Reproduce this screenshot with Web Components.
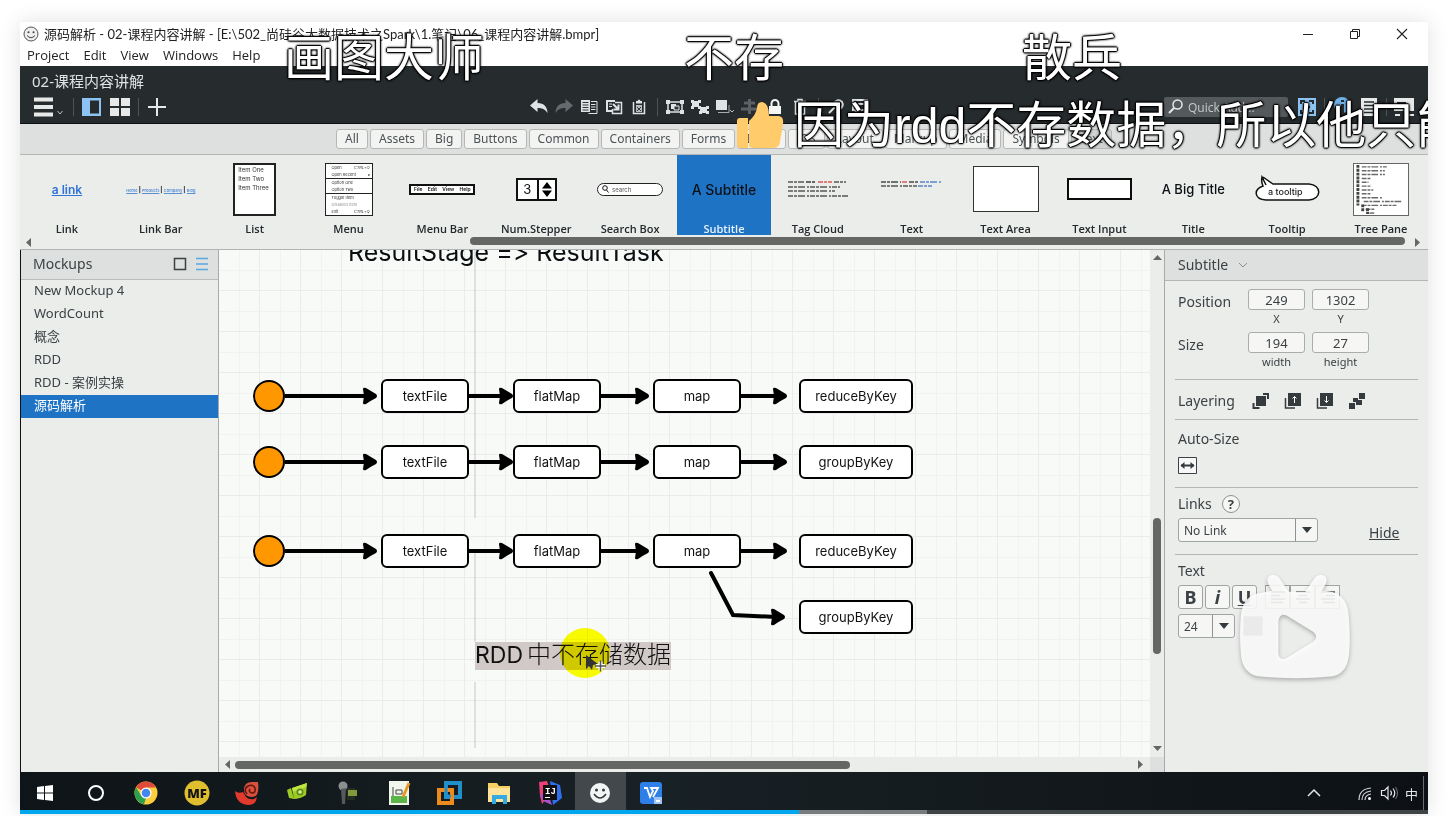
<!DOCTYPE html>
<html lang="zh-CN">
<head>
<meta charset="utf-8">
<title>源码解析 - 02-课程内容讲解</title>
<style>
  html, body { height: 100%; margin: 0; background: #fff; }
  body { font-family: "Open Sans", "Noto Sans CJK SC", sans-serif; font-size: 12px; color: #3b4145; }
</style>
</head>
<body>
<video-stage></video-stage>

<script>
const define = (name, css, html, setup) => {
  const template = document.createElement('template');
  template.innerHTML = `<style>:host,*{box-sizing:border-box}button,input,select{font:inherit;color:inherit;margin:0}button{border:0;background:none;padding:0}svg{display:block}${css}</style>${html}`;
  customElements.define(name, class extends HTMLElement {
    constructor() {
      super();
      this.attachShadow({ mode: 'open' }).append(template.content.cloneNode(true));
    }
    connectedCallback() { if (setup) setup(this, this.shadowRoot); }
  });
};

/* ---------- icons ---------- */
const ICONS = {
  smile: [16, 16, '<circle cx="8" cy="8" r="7" fill="#eee" stroke="#555"/><circle cx="5.5" cy="6.3" r="1" fill="#444"/><circle cx="10.5" cy="6.3" r="1" fill="#444"/><path d="M4 9.5q4 4.5 8 0" fill="none" stroke="#444"/>'],
  min: [12, 12, '<path d="M1 6.5h10" stroke="#222"/>'],
  restore: [12, 12, '<path d="M1.500 3.500h7v7h-7zM3.500 3.500v-2h7v7h-2" fill="none" stroke="#222"/>'],
  close: [12, 12, '<path d="M1 1l10 10M11 1L1 11" stroke="#222" stroke-width="1.100"/>'],
  menu: [20, 20, '<path d="M0 2.500h19M0 10h19M0 17.500h19" stroke="#e6e9e8" stroke-width="4"/>'],
  chev: [6, 20, '<path d="M.500 14l2.500 3 2.500-3" fill="none" stroke="#b9bfc0"/>'],
  side: [20, 20, '<path d="M0 1h19v18H0z" fill="#8cc3f2"/><path d="M8 3.500h9v13H8z" fill="#262b2e"/>'],
  grid: [20, 20, '<path d="M0 1h9v8H0zM11 1h9v8h-9zM0 11h9v8H0zM11 11h9v8h-9z" fill="#e6e9e8"/>'],
  plus: [20, 20, '<path d="M10 1v18M1 10h18" stroke="#e6e9e8" stroke-width="2"/>'],
  undo: [20, 18, '<path d="M1 7.500L8.500 1v4C15 5 18.500 9 18.500 15 16 11 13 10 8.500 10v4z" fill="#dfe3e3"/>'],
  redo: [20, 18, '<path d="M19 7.500L11.500 1v4C5 5 1.500 9 1.500 15 4 11 7 10 11.500 10v4z" fill="#646a6d"/>'],
  copy: [20, 18, '<path d="M2 2h9v12H2z" fill="#dfe3e3"/><path d="M3.500 4.500h6M3.500 7h6M3.500 9.500h6M3.500 12h6" stroke="#30363a"/><path d="M12 3.500h6v12H9.500M12 6.500h4.500M12 9h4.500M12 11.500h4.500" stroke="#dfe3e3" fill="none"/>'],
  dup: [20, 18, '<path d="M2 2h9v2H4v8h4v2H2z" fill="#dfe3e3"/><path d="M5 6h3M5 8.500h3" stroke="#dfe3e3"/><path d="M11 4.500h6.500v11h-9V11" stroke="#dfe3e3" fill="none" stroke-width="1.500"/><path d="M9 6l5 5M14.500 6.500v5h-5" stroke="#dfe3e3" stroke-width="2" fill="none"/>'],
  clip: [20, 18, '<path d="M4.500 4v11.500h11V4" stroke="#dfe3e3" fill="none" stroke-width="1.500"/><path d="M7 3h1.500q1.500-3 3 0H13v2.500H7z" fill="#dfe3e3"/><path d="M7 7h6v7H7z" fill="#b9bfc0"/><path d="M8 9l4 4M12 9l-4 4" stroke="#30363a"/>'],
  group: [20, 18, '<path d="M3 4h14v10H3z" stroke="#dfe3e3" fill="none" stroke-width="1.500"/><path d="M1 2h4v4H1zM15 2h4v4h-4zM1 12h4v4H1zM15 12h4v4h-4zM6 6h5v5H6z" fill="#dfe3e3"/><path d="M9 8h5v4H9z" stroke="#dfe3e3" fill="#30363a"/>'],
  ungroup: [20, 18, '<path d="M2 3h7v6H2zM10 9h7v6h-7z" fill="#dfe3e3"/><path d="M1 2h3v3H1zM8 2h3v3H8zM1 8h3v3H1zM8 8h3v3H8zM16 8h3v3h-3zM16 13h3v3h-3zM9 13h3v3H9z" fill="#dfe3e3"/>'],
  front: [20, 18, '<path d="M1 2h11v10H1z" fill="#dfe3e3"/><path d="M3 14.500h11V7" stroke="#a8adae" fill="none"/><path d="M15 12l2 2 2-2" stroke="#b9bfc0" fill="none"/>'],
  align: [20, 18, '<path d="M9.500 1v15M4 5h11M1 11h17" stroke="#5b6164" stroke-width="3"/>'],
  lock: [20, 18, '<path d="M4 8h12v8H4z" fill="#f4f6f6"/><path d="M6.500 8V5.500a3.500 3.500 0 017 0V8" fill="none" stroke="#f4f6f6" stroke-width="2"/>'],
  trash: [20, 18, '<path d="M4 3.500h12M8 3V1.500h4V3M5.500 4v12h9V4M8.500 6.500v7M11.500 6.500v7" fill="none" stroke="#dfe3e3" stroke-width="1.500"/>'],
  chain: [20, 18, '<path d="M3 15l6-6M8 5q4-5 8-1 2 4-2 7" fill="none" stroke="#dfe3e3" stroke-width="2"/>'],
  markup: [20, 18, '<path d="M2 2h14v10H8l-3 3v-3H2z" fill="none" stroke="#dfe3e3" stroke-width="2"/><path d="M5 6h8" stroke="#dfe3e3" stroke-width="2"/>'],
  search: [16, 16, '<circle cx="9.500" cy="5.500" r="4.500" fill="none" stroke="#e6e9e8" stroke-width="1.500"/><path d="M6 9l-5 5" stroke="#e6e9e8" stroke-width="2"/>'],
  save: [20, 20, '<path d="M1 1h18v18H1z" fill="#8cc3f2"/><path d="M4 7V4h4M12 4h4v3M4 13v3h4M12 16h4v-3M7 10h6" fill="none" stroke="#262b2e" stroke-width="2"/>'],
  info: [20, 20, '<circle cx="10" cy="8" r="8" fill="#6eb0e8"/><path d="M9 7h3v12H9zM9 3h3v2H9z" fill="#262b2e"/>'],
  notes: [20, 20, '<path d="M2 1h16v18H2z" fill="#e6e9e8"/><path d="M5 5h10M5 8.500h10M5 12h10M5 15.500h10" stroke="#262b2e" stroke-width="1.500"/>'],
  present: [20, 20, '<path d="M0 1h20v13H0z" fill="#e6e9e8"/><path d="M3 5h9v6H3z" fill="#262b2e"/><path d="M1 18h5M14 18h6" stroke="#e6e9e8" stroke-width="2"/>'],
  square: [14, 14, '<path d="M1.500 1.500h11v11h-11z" fill="none" stroke="#3b4145" stroke-width="1.500"/>'],
  lines: [14, 14, '<path d="M1 1.500h12M1 7h12M1 12.500h12" stroke="#5aa7e4" stroke-width="1.300"/>'],
  down: [10, 10, '<path d="M1 3l4 4 4-4" fill="none" stroke="#888e90"/>'],
  tofront: [18, 18, '<path d="M4 4h10v10H4z" fill="#343a3d"/><path d="M11 2h5v5M1.500 11v5h6" stroke="#343a3d" stroke-width="2" fill="none"/>'],
  forward: [18, 18, '<path d="M4 1h13v13H4z" fill="#343a3d"/><path d="M1.500 6v10H11" stroke="#343a3d" stroke-width="1.500" fill="none"/><path d="M10.500 11V4.500M8.500 6.500l2-2 2 2" stroke="#fff" fill="none"/>'],
  backward: [18, 18, '<path d="M4 1h13v13H4z" fill="#343a3d"/><path d="M1.500 6v10H11" stroke="#343a3d" stroke-width="1.500" fill="none"/><path d="M10.500 4v6.500M8.500 8.500l2 2 2-2" stroke="#fff" fill="none"/>'],
  toback: [18, 18, '<path d="M11 1h6v6h-6zM5 6h5v2h4v5H8v-3H5z M1 11h6v6H1z" fill="#343a3d"/>'],
  autosize: [19, 17, '<path d="M.500.500h18v16H.500z" fill="#f7f8f7" stroke="#3b4145"/><path d="M3 8.500h13" stroke="#343a3d" stroke-width="2"/><path d="M6.500 5L2.500 8.500l4 3.500zM12.500 5l4 3.500-4 3.500z" fill="#343a3d"/>'],
  left: [16, 16, '<path d="M1 3h14M1 6.500h9M1 10h14M1 13.500h12" stroke="#4a5053" stroke-width="1.500"/>'],
  center: [16, 16, '<path d="M1 3h14M4 6.500h8M1 10h14M4 13.500h8" stroke="#4a5053" stroke-width="1.500"/>'],
  right: [16, 16, '<path d="M1 3h14M6 6.500h9M1 10h14M3 13.500h12" stroke="#4a5053" stroke-width="1.500"/>'],
  win: [24, 24, '<path d="M4 6l7-1v6.500H4zM12 5l8-1v7.500h-8zM4 12.500h7V19l-7-1zM12 12.500h8V20l-8-1z" fill="#fff"/>'],
  ring: [24, 24, '<circle cx="12" cy="12" r="7" fill="none" stroke="#fff" stroke-width="2"/>'],
  chrome: [24, 24, '<circle cx="12" cy="12" r="11.500" fill="#fccd3c"/><path d="M12 12L2 6.300A11.500 11.500 0 0122 6.500H12z" fill="#e04b3c"/><path d="M2 6.300L7.500 15l4.500 2-2 6.300A11.500 11.500 0 012 6.300z" fill="#2da14f"/><circle cx="12" cy="12" r="5.500" fill="#fff"/><circle cx="12" cy="12" r="4.300" fill="#4586ee"/>'],
  mf: [26, 26, '<circle cx="13" cy="13" r="12.500" fill="#e0bf2f"/><text x="13" y="18" text-anchor="middle" font-family="Open Sans" font-weight="800" font-size="13" fill="#141414">MF</text>'],
  snail: [26, 26, '<path d="M1 11q3 3 8 1l3 5q3 3 8 2l3-2q-1 8-9 8Q2 24 1 11z" fill="#e23a2d"/><path d="M24 2q2 15-6 15-8 0-8-7 0-8 8-8z" fill="#d9503c"/><path d="M13 14q-4-5 1-8 5-2 7 2 1 5-3 5-4-1-2-4" fill="none" stroke="#5f1712" stroke-width="1.500"/>'],
  green: [26, 26, '<path d="M2 10l4-2 3 11-5-1zM7 8l15-5-1 12q-6 4-12 4z" fill="#9ccb25"/><path d="M7 8l15-5-1 4-13 5z" fill="#c0e441"/><circle cx="15" cy="12" r="3.500" fill="#5f8c16"/><circle cx="15" cy="12" r="1.800" fill="#dcef9c"/>'],
  mic: [26, 26, '<circle cx="8" cy="6" r="4.500" fill="#8a8f91"/><path d="M6 9l5-1-1 16H7z" fill="#55595b"/><path d="M12 8h8v12h-8z" fill="#252c20"/><path d="M13 10h9v6h-9z" fill="#7f9b3c"/>'],
  note: [26, 26, '<path d="M3 1h20v24H3z" fill="#f1f6ed"/><path d="M5 16h16v7H5z" fill="#5cb548"/><path d="M7 7v9M10 10h6v4h-6z" stroke="#444" fill="none"/><path d="M23 3l-6 14" stroke="#e69a25" stroke-width="3"/>'],
  vm: [26, 26, '<path d="M10 3h14v14H10z" fill="none" stroke="#218fc9" stroke-width="4"/><path d="M3 10h13v13H3z" fill="none" stroke="#ef8b1c" stroke-width="4"/><path d="M10 8v8h5" fill="none" stroke="#218fc9" stroke-width="3"/>'],
  folder: [26, 26, '<path d="M2 3h9l2 3h11v16H2z" fill="#f7cf62"/><path d="M2 8h22v14H2z" fill="#fde49a"/><path d="M6 24v-9h15v9h-4v-5h-7v5z" fill="#35a9e2"/>'],
  idea: [26, 26, '<path d="M2 2l8-1 4 12-9 11-2-8z" fill="#ee3f78"/><path d="M13 1l10 4 2 13-9 7z" fill="#3070ee"/><path d="M3 14h8l4 11-9-4z" fill="#a651c8"/><path d="M6 5h14v15H6z" fill="#101012"/><text x="8" y="14" font-family="Liberation Mono" font-weight="700" font-size="9" fill="#fff">IJ</text><path d="M8 17.500h5" stroke="#fff"/>'],
  face: [24, 24, '<circle cx="12" cy="12" r="10" fill="#f3f4f4"/><circle cx="8.500" cy="9" r="1.500" fill="#33383b"/><circle cx="15.500" cy="9" r="1.500" fill="#33383b"/><path d="M6 13q6 8 12 0" fill="none" stroke="#33383b" stroke-width="1.500"/>'],
  wps: [26, 26, '<rect x="2" y="2" width="22" height="22" rx="3" fill="#2f7fe8"/><path d="M6 8h3l3 9 3-6-2-3h7l-5 9" fill="none" stroke="#fff" stroke-width="1.800"/><path d="M16 17h8v7h-8z" fill="#9fc5f7"/><path d="M18 21h4" stroke="#fff" stroke-width="2"/>'],
  up: [14, 14, '<path d="M1 10l6-6 6 6" fill="none" stroke="#e5e7e8" stroke-width="1.500"/>'],
  wifi: [16, 16, '<g fill="none" stroke="#cfd2d3" stroke-width="1.200"><path d="M2 15Q2 4 14 3M5 15q0-8 9-9M8 15q0-5 6-6"/></g><circle cx="12.500" cy="13.500" r="1.500" fill="#fff"/>'],
  sound: [18, 16, '<path d="M1.500 5.500h3L8 2v12l-3.500-3.500h-3z" fill="none" stroke="#e5e7e8" stroke-width="1.200"/><path d="M10.500 5.500q2 2.500 0 5M13 3.500q3.500 4.500 0 9" fill="none" stroke="#e5e7e8" stroke-width="1.200"/><path d="M15.500 2q4 6 0 12" fill="none" stroke="#70767a"/>'],
};
define('ui-icon', ':host{display:block;flex:none}', '<div></div>', (el, root) => {
  const [w, h, body] = ICONS[el.getAttribute('name')];
  root.querySelector('div').innerHTML = `<svg width="${w}" height="${h}" viewBox="0 0 ${w} ${h}" aria-hidden="true">${body}</svg>`;
});

/* ---------- window chrome ---------- */
define('title-bar', `
  :host{display:flex;align-items:center;height:22px;padding:2px 20px 0 3px;background:#fff;color:#222}
  h1{margin:0 0 0 5px;font:400 13px/20px "Lato","Noto Sans CJK SC",sans-serif;flex:1;white-space:nowrap}
  .ctl{display:flex;gap:35px}`,
  `<ui-icon name="smile"></ui-icon><h1>源码解析 - 02-课程内容讲解 - [E:\\502_尚硅谷大数据技术之Spark\\1.笔记\\06_课程内容讲解.bmpr]</h1>
  <div class="ctl"><button aria-label="Minimize"><ui-icon name="min"></ui-icon></button><button aria-label="Restore"><ui-icon name="restore"></ui-icon></button><button aria-label="Close"><ui-icon name="close"></ui-icon></button></div>`);

define('menu-bar', `
  :host{display:flex;align-items:center;gap:14px;height:22px;padding-left:7px;background:#fff;color:#222;font-size:13px}`,
  ['Project', 'Edit', 'View', 'Windows', 'Help'].map(t => `<button>${t}</button>`).join(''));

const tool = (n, l) => `<button aria-label="${l || n}"><ui-icon name="${n}"></ui-icon></button>`;
define('tool-header', `
  :host{display:block;height:58px;background:#262b2e;border-bottom:1px solid #0e1011;color:#dfe3e3}
  h2{margin:0;padding:5px 0 0 12px;font-size:15px;line-height:20px;font-weight:400;font-family:"Noto Sans","Noto Sans CJK SC",sans-serif}
  .bar{display:grid;grid-template-columns:36% 1fr auto;align-items:center;height:32px}
  .left,.mid,.right{display:flex;align-items:center}
  .left{padding-left:14px;gap:8px}
  .left .dd{display:flex;gap:3px;margin-right:2px}
  .mid button{width:25px;display:flex;justify-content:center}
  i{width:1px;height:18px;background:#4c5255}
  .mid i{margin:0 5px}
  .right{gap:7px;padding-right:14px}
  .find{display:flex;align-items:center;gap:4px;width:124px;height:20px;background:#54595c;border-radius:2px;padding-left:4px;margin-right:2px}
  input{width:90px;border:0;background:none;padding:0;outline:0;font-size:12px}
  input::placeholder{color:#c6cacb;opacity:1}`,
  `<h2>02-课程内容讲解</h2>
  <div class="bar">
    <div class="left"><button class="dd" aria-label="Main menu"><ui-icon name="menu"></ui-icon><ui-icon name="chev"></ui-icon></button><i></i>${tool('side')}${tool('grid')}<i></i>${tool('plus')}</div>
    <div class="mid">${tool('undo')}${tool('redo')}${tool('copy')}${tool('dup')}${tool('clip')}<i></i>${tool('group')}${tool('ungroup')}${tool('front')}${tool('align')}${tool('lock')}${tool('trash')}<i></i>${tool('chain')}${tool('markup')}</div>
    <div class="right"><label class="find"><ui-icon name="search"></ui-icon><input aria-label="Quick Add" placeholder="Quick Add..."></label>${tool('save')}<i></i>${tool('info')}${tool('notes')}<i></i>${tool('present')}</div>
  </div>`);

define('category-bar', `
  :host{display:flex;align-items:center;justify-content:center;gap:2px;height:31px;background:#dde0de;border-bottom:1px solid #b3b6b4}
  button{height:20px;padding:0 8px;border:1px solid #b4b8b6;border-radius:3px;background:#f3f4f2;color:#4b5256;font-family:"Noto Sans",sans-serif;font-size:12px;line-height:18px}
  .on{background:#d0d3d1}`,
  ['All', 'Assets', 'Big', 'Buttons', 'Common', 'Containers', 'Forms', 'Icons', 'iOS', 'Layout', 'Markup', 'Media', 'Symbols', 'Text'].map(t => `<button${t === 'Text' ? ' class="on"' : ''}>${t}</button>`).join(''));

/* ---------- component library ---------- */
define('library-item', `
  :host{display:flex;flex-direction:column;align-items:center;flex:1 1 0;min-width:0;height:80px;color:#23292d}
  :host([selected]){background:#1f73c5;color:#e8f2fc}
  button{display:flex;flex-direction:column;align-items:center;width:100%;height:80px}
  .pic{height:68px;display:flex;align-items:center;justify-content:center;color:#111;font-family:"Inter",sans-serif}
  .name{font-family:"Open Sans",sans-serif;font-size:11px;line-height:12px;font-weight:600;white-space:nowrap}`,
  `<button><span class="pic"><slot></slot></span><span class="name"></span></button>`,
  (el, root) => { root.querySelector('.name').textContent = el.getAttribute('name'); });

const seeded = (lines) => lines.map(([y, x, len, c]) => `<path d="M${x} ${y}h${len}" stroke="${c}" stroke-width="1.500" stroke-dasharray="5 1 3 1 7 2 2 1" opacity=".8"/>`).join('');
define('component-library', `
  :host{display:block;height:95px;background:#ebedeb;border-bottom:1px solid #b0b3b1;overflow:hidden}
  .items{display:flex}
  .link{color:#2f73d8;font-size:12px;font-weight:600;text-decoration:underline}
  .bar4{color:#5b8fd6;font-size:4px;white-space:nowrap;font-weight:600} .bar4 u{margin:0 1px} .bar4 b{color:#555;font-size:6px}
  .list{width:43px;height:53px;border:2px solid #222;background:#fff;font-size:6px;line-height:9px;text-align:left;padding:0 3px;color:#333}
  .list.menu{width:48px;font-size:4px;line-height:7px;padding:0 2px 0 6px;border-width:1px}
  .list.menu span{display:flex;justify-content:space-between;white-space:nowrap}
  .list.menu .l{border-top:1px solid #222;margin:0 -2px 0 -6px;padding-left:6px}
  .dim{color:#999}
  .mb{width:66px;height:11px;border:2px solid #111;background:#fff;display:flex;justify-content:space-around;align-items:center;font-size:5px;font-weight:600}
  .step{display:flex;width:41px;height:23px;border:2px solid #111;background:#fff;font-size:13px;line-height:19px}
  .step span{flex:1;border-right:2px solid #111;text-align:center}
  .sb{display:flex;align-items:center;gap:3px;width:66px;height:13px;border:1px solid #222;border-radius:7px;background:#fff;font-size:6px;padding-left:4px;color:#555}
  .h{font-size:14px;font-weight:500;color:#0c1115;white-space:nowrap} .h.s{font-size:13px}
  .ta{width:66px;height:46px;border:1px solid #333;background:#fff}
  .ti{width:65px;height:22px;border:2px solid #0c0c0c;background:#fff}
  .tree{width:56px;height:53px;border:1px solid #666;background:#fff}
  .scroll{display:flex;align-items:center;height:14px;padding:0 8px 0 6px;justify-content:space-between}
  .thumb{flex:1;height:8px;border-radius:4px;background:#656764;margin:0 9px 2px 438px}`,
  `<div class="items">
    <library-item name="Link"><span class="link">a link</span></library-item>
    <library-item name="Link Bar"><span class="bar4"><u>Home</u><b>|</b><u>Products</u><b>|</b><u>Company</u><b>|</b><u>Blog</u></span></library-item>
    <library-item name="List"><div class="list">Item One<br>Item Two<br>Item Three</div></library-item>
    <library-item name="Menu"><div class="list menu"><span>Open<em>CTRL+O</em></span><span>Open Recent<em>▸</em></span><span class="l">Option One</span><span>Option Two</span><span class="l">Toggle Item</span><span class="dim">Disabled Item</span><span>Exit<em>CTRL+Q</em></span></div></library-item>
    <library-item name="Menu Bar"><div class="mb"><span>File</span><span>Edit</span><span>View</span><span>Help</span></div></library-item>
    <library-item name="Num.Stepper"><div class="step"><span>3</span><svg width="16" height="19"><path d="M8 2l5 6.500H3zM8 17l5-6.500H3z"/></svg></div></library-item>
    <library-item name="Search Box"><div class="sb"><svg width="7" height="8"><circle cx="3" cy="3" r="2.300" fill="none" stroke="#111"/><path d="M4.500 5L6.500 7.500" stroke="#111"/></svg>search</div></library-item>
    <library-item name="Subtitle" selected><span class="h">A Subtitle</span></library-item>
    <library-item name="Tag Cloud"><svg width="62" height="20">${seeded([[3, 1, 16, '#333'], [3, 19, 10, '#111'], [3, 31, 14, '#e03030'], [3, 47, 12, '#333'], [8, 1, 52, '#333'], [12, 1, 47, '#333'], [17, 1, 60, '#333']])}</svg></library-item>
    <library-item name="Text"><svg width="64" height="30">${seeded([[8, 1, 20, '#222'], [8, 22, 6, '#d33'], [8, 29, 9, '#222'], [8, 40, 22, '#3b6fc4'], [12, 1, 36, '#333'], [12, 38, 14, '#3b6fc4']])}</svg></library-item>
    <library-item name="Text Area"><div class="ta"></div></library-item>
    <library-item name="Text Input"><div class="ti"></div></library-item>
    <library-item name="Title"><span class="h s">A Big Title</span></library-item>
    <library-item name="Tooltip"><svg width="66" height="28" viewBox="0 0 66 28"><path d="M12 10L8 2q-1 5 1 9C0 14-1 24 12 25h43c13-1 13-15 0-16H19L9 2" fill="#fff" stroke="#111" stroke-width="1.500"/><text x="14" y="20" font-size="9" font-weight="500" fill="#222">a tooltip</text></svg></library-item>
    <library-item name="Tree Pane"><svg class="tree" viewBox="0 0 56 53"><path d="M4 1v42M9 42v8M14 46v6" stroke="#444" stroke-width="3" stroke-dasharray="3 1" fill="none"/>${seeded([[3, 8, 26, '#444'], [7, 8, 24, '#444'], [11, 8, 24, '#444'], [15, 8, 9, '#444'], [19, 8, 7, '#444'], [23, 8, 9, '#444'], [27, 8, 12, '#444'], [31, 8, 9, '#444'], [35, 8, 21, '#444'], [39, 10, 40, '#444'], [43, 8, 36, '#444'], [47, 12, 9, '#444'], [51, 16, 5, '#444']])}</svg></library-item>
  </div>
  <div class="scroll"><svg width="6" height="9"><path d="M5 0v9L0 4.500z" fill="#656764"/></svg><div class="thumb"></div><svg width="6" height="9"><path d="M1 0v9l5-4.500z" fill="#656764"/></svg></div>`);

/* ---------- sidebar ---------- */
define('mockup-list', `
  :host{display:flex;flex-direction:column;width:199px;flex:none;background:#ebedeb;border-right:1px solid #a6aaa8;border-left:1px solid #111;font-family:"Noto Sans","Noto Sans CJK SC",sans-serif}
  header{display:flex;align-items:center;gap:8px;height:30px;padding:0 9px 2px 12px;background:#dde0de;border-bottom:1px solid #babdbb}
  h3{flex:1;margin:0;font-size:14px;font-weight:400}
  a{display:block;height:23px;line-height:21px;padding-left:13px;color:#3b4145;text-decoration:none;font-size:13px}
  a.on{background:#1f73c5;color:#fff}`,
  `<header><h3>Mockups</h3>${tool('square')}${tool('lines')}</header>
  <nav>${['New Mockup 4', 'WordCount', '概念', 'RDD', 'RDD - 案例实操', '源码解析'].map((t, i) => `<a href="#"${i === 5 ? ' class="on"' : ''}>${t}</a>`).join('')}</nav>`);

/* ---------- canvas ---------- */
define('flow-node', `
  :host{display:flex;align-items:center;justify-content:center;width:88px;height:34px;border:2px solid #000;border-radius:6px;background:#fff;color:#111;font-family:"Inter",sans-serif;font-size:13px}
  :host([wide]){width:114px}`, '<slot></slot>');
define('flow-start', ':host{display:block;width:32px;height:32px;border:2px solid #000;border-radius:50%;background:#ff9800}', '');
define('flow-arrow', ':host{display:block}', '<div></div>', (el, root) => {
  const w = +el.getAttribute('span'), t = +el.getAttribute('tip');
  root.querySelector('div').innerHTML = `<svg width="${w}" height="18"><path d="M0 9h${t - 9}" stroke="#000" stroke-width="4"/><path d="M${t - 13} 2q0-2 3-1 5 3 10 6 2 2 0 4-6 3-10 6-3 1-3-1l1-7z"/></svg>`;
});
define('flow-row', ':host{display:flex;align-items:center;position:absolute;left:34px}',
  `<flow-start></flow-start><flow-arrow span="96" tip="91"></flow-arrow><flow-node>textFile</flow-node><flow-arrow span="44" tip="43"></flow-arrow><flow-node>flatMap</flow-node><flow-arrow span="52" tip="47"></flow-arrow><flow-node>map</flow-node><flow-arrow span="58" tip="45"></flow-arrow><flow-node wide><slot></slot></flow-node>`);

define('design-canvas', `
  :host{display:grid;grid-template:minmax(0,1fr) 15px / minmax(0,1fr) 14px;flex:1;min-width:0;background:#ebedeb}
  .sheet{position:relative;overflow:hidden;background:
    linear-gradient(90deg,#e9ecea 1px,transparent 1px) 40px 40px/41px 41px,
    linear-gradient(#e9ecea 1px,transparent 1px) 40px 40px/41px 41px,
    linear-gradient(90deg,#f1f3f2 1px,transparent 1px) 20px 20px/41px 41px,
    linear-gradient(#f1f3f2 1px,transparent 1px) 20px 20px/41px 41px,#f8faf8}
  .guide,.branch,.cursor,.head,.note,flow-node{position:absolute}
  .guide{left:255px;top:0}
  .head{left:129px;top:-13px;margin:0;font:400 25px/30px "Inter",sans-serif;font-feature-settings:"calt" 0;color:#0b0f12;white-space:nowrap}
  .branch{left:480px;top:318px}
  flow-node{left:580px;top:350px}
  .glow{position:absolute;left:341px;top:378px;width:50px;height:50px;border-radius:50%;background:#ff0;mix-blend-mode:multiply}
  .note{left:256px;top:392px;height:28px;background:#d0c9c8;margin:0;font:300 24px/24px "Lato","Noto Sans CJK SC",sans-serif;color:#111;white-space:nowrap}
  .note span{font-family:"Inter",sans-serif;font-size:23px;font-weight:400;margin-right:4px}
  .cursor{left:366px;top:404px}
  .v{display:grid;grid-template-rows:6px 258fr 136fr 92fr 6px;justify-items:center;padding:5px 0}
  .v div{grid-row:3;width:8px;border-radius:4px;background:#656764} .v svg:last-child{grid-row:5}
  .h{display:flex;align-items:center;padding:0 7px 0 6px;justify-content:space-between}
  .h div{width:67%;height:8px;border-radius:4px;background:#656764;margin:0 auto 0 4px}
  .corner{background:#dde0de}`,
  `<div class="sheet">
    <svg class="guide" width="2" height="500"><path d="M1 0v268M1 300v92M1 432v66" stroke="#c4c7c5"/></svg>
    <p class="head">ResultStage =&gt; ResultTask</p>
    <flow-row style="top:129px">reduceByKey</flow-row>
    <flow-row style="top:195px">groupByKey</flow-row>
    <flow-row style="top:284px">reduceByKey</flow-row>
    <svg class="branch" width="92" height="62"><path d="M12 5l22 42 43 2" fill="none" stroke="#000" stroke-width="4" stroke-linecap="round"/><path d="M72 42q0-2 3-1 5 3 10 6 2 2 0 4-6 3-10 6-3 1-3-1l1-7z"/></svg>
    <flow-node wide>groupByKey</flow-node>
    <p class="note"><span>RDD</span>中不存储数据</p>
    <div class="glow"></div>
    <svg class="cursor" width="24" height="20"><path d="M1 1v14l3-3 3 4 1-5 5-1z" fill="#333"/><path d="M11 12h9M15.500 7.500v9" stroke="#fff" stroke-width="4"/><path d="M10 12h11M15.500 6.500v11" stroke="#555" stroke-width="1.500"/></svg>
  </div>
  <div class="v"><svg width="9" height="6"><path d="M0 5h9L4.500 0z" fill="#656764"/></svg><div></div><svg width="9" height="6"><path d="M0 0h9L4.500 5z" fill="#656764"/></svg></div>
  <div class="h"><svg width="6" height="9"><path d="M5 0v9L0 4.500z" fill="#656764"/></svg><div></div><svg width="6" height="9"><path d="M1 0v9l5-4.500z" fill="#656764"/></svg></div>
  <div class="corner"></div>`);

/* ---------- property inspector ---------- */
define('number-field', `
  :host{display:block;width:57px}
  label{display:flex;flex-direction:column;align-items:center;font-size:11px;line-height:18px;height:43px}
  input{width:57px;height:21px;border:1px solid #a9adab;border-radius:3px;background:#f6f7f5;text-align:center;font-size:13px;padding:0}`,
  '<label><input><span></span></label>', (el, root) => {
    root.querySelector('input').value = el.getAttribute('value');
    root.querySelector('span').textContent = el.getAttribute('label');
  });
define('drop-down', `
  :host{display:block}
  div{display:grid;grid-template-columns:1fr 22px;height:24px;border:1px solid #a0a4a2;border-radius:3px;background:#f6f7f5}
  select{grid-area:1/1/2/3;appearance:none;border:0;background:none;padding:0 0 0 5px;font-size:12px;outline:0;width:100%}
  span{grid-area:1/2;border-left:1px solid #8d9190;display:flex;align-items:center;justify-content:center;pointer-events:none}`,
  `<div><select><option></option></select><span><svg width="10" height="6"><path d="M0 0h10L5 6z" fill="#343a3d"/></svg></span></div>`,
  (el, root) => {
    root.querySelector('option').textContent = el.getAttribute('value');
    root.querySelector('select').setAttribute('aria-label', el.getAttribute('label'));
  });
define('property-panel', `
  :host{display:block;width:264px;flex:none;background:#ebedeb;border-left:1px solid #a6aaa8;font-family:"Noto Sans",sans-serif;font-size:14px}
  header{display:flex;align-items:center;gap:10px;height:31px;padding:0 13px;background:#dde0de;border-bottom:1px solid #b3b6b4}
  h3,h4{margin:0;font:inherit;line-height:18px}
  section{margin:0 10px;padding-left:3px;border-bottom:1px solid #b3b6b4}
  section:last-child{border:0}
  .pos{display:grid;grid-template-columns:63px 57px 57px;column-gap:7px;padding-top:8px;height:99px;align-content:start}
  .pos h4{line-height:26px}
  .layer{display:flex;align-items:center;height:40px;padding-top:2px;gap:14px}
  .layer h4{width:60px}
  .auto{height:68px;padding-top:10px;display:flex;flex-direction:column;align-items:flex-start;gap:9px}
  .links{height:67px;padding-top:7px}
  .row{display:flex;align-items:center}
  .row + .row{margin-top:5px}
  .q{width:18px;height:18px;border:1px solid #8d9190;border-radius:50%;background:#f6f7f5;font-size:13px;font-weight:700;line-height:15px;margin-left:10px}
  .links drop-down{width:140px} a{color:#3b4145;margin:5px 0 0 51px;font-size:14px}
  .text{padding-top:7px}
  .text h4{margin-bottom:5px}
  .text .row button{width:25px;height:24px;border:1px solid #a0a4a2;border-radius:3px;background:#f6f7f5;display:flex;align-items:center;justify-content:center;margin-right:2px;font-size:18px;font-weight:700;line-height:20px}
  .text .row button.f{margin-left:6px} .text .row button.j{margin-right:0;border-radius:0}
  .text .on{background:#c9cccb}
  .text drop-down{width:57px}
  .text .row button.sw{width:20px;height:20px;margin-left:8px;background:#6d7173;border-radius:0}`,
  `<header><h3>Subtitle</h3><ui-icon name="down"></ui-icon></header>
  <section class="pos"><h4>Position</h4><number-field label="X" value="249"></number-field><number-field label="Y" value="1302"></number-field>
    <h4>Size</h4><number-field label="width" value="194"></number-field><number-field label="height" value="27"></number-field></section>
  <section class="layer"><h4>Layering</h4>${tool('tofront')}${tool('forward')}${tool('backward')}${tool('toback')}</section>
  <section class="auto"><h4>Auto-Size</h4>${tool('autosize')}</section>
  <section class="links"><div class="row"><h4>Links</h4><button class="q">?</button></div><div class="row"><drop-down label="Link" value="No Link"></drop-down><a href="#">Hide</a></div></section>
  <section class="text"><h4>Text</h4><div class="row"><button>B</button><button><em>i</em></button><button><u>U</u></button><button class="f j on"><ui-icon name="left"></ui-icon></button><button class="j"><ui-icon name="center"></ui-icon></button><button class="j"><ui-icon name="right"></ui-icon></button></div>
    <div class="row"><drop-down label="Font size" value="24"></drop-down><button class="sw" aria-label="Color"></button></div></section>`);

/* ---------- taskbar ---------- */
define('task-bar', `
  :host{display:flex;align-items:center;height:38px;flex:none;background:linear-gradient(90deg,#0e1417,#182125 45%,#0d1115);color:#e5e7e8}
  .apps{display:flex;width:656px;height:100%}
  .apps button{flex:1;display:flex;align-items:center;justify-content:center;padding-top:4px}
  .apps .on{background:#42484b}
  .tray{display:flex;align-items:center;margin-left:auto;height:100%;gap:7px;font-size:13px;padding:4px 4px 0 0}
  .tray button:first-child{margin-right:29px}
  .tray span{margin-right:2px}
  .tray b{width:1px;height:100%;background:#6a6e70;margin-left:-4px}`,
  `<div class="apps">${['win', 'ring', 'chrome', 'mf', 'snail', 'green', 'mic', 'note', 'vm', 'folder', 'idea', 'face', 'wps'].map(n => tool(n).replace('<button', n === 'face' ? '<button class="on"' : '<button')).join('')}</div>
  <div class="tray">${tool('up')}${tool('wifi')}${tool('sound')}<span>中</span><b></b></div>`);

/* ---------- player overlays ---------- */
define('bullet-comment', `
  :host{position:absolute;display:flex;align-items:center;color:#fff;font:400 50px/60px "Liberation Sans","Noto Sans CJK SC",sans-serif;white-space:nowrap;
    text-shadow:1px 0 1px #000,-1px 0 1px #000,0 1px 1px #000,0 -1px 1px #000,0 0 3px #000,0 0 3px #000;pointer-events:none}`, '<slot></slot>');
define('play-badge', ':host{position:absolute;right:72px;bottom:126px;pointer-events:none}',
  `<svg width="118" height="118" viewBox="0 0 114 114" style="filter:drop-shadow(0 2px 2px rgba(0,0,0,.3))"><path fill-rule="evenodd" d="M33 20L29 13q-2-6 3-8 5-1 8 3l9 13h16l9-13q3-4 8-3 5 2 3 8l-4 7q25 0 26 25 2 25 0 38-2 18-18 20-33 3-67 0-17-2-19-20-2-22 0-40 2-19 20-21zM39 50v31q1 7 8 4l26-16q5-4 0-9L47 44q-7-3-8 6z" fill="#fff" fill-opacity=".88"/></svg>`);
define('play-progress', `
  :host{display:grid;grid-template-columns:779fr 128fr 501fr;height:4px;flex:none;background:#3f4447}
  .done{background:#00a7ee}.buf{background:#777c7e}`, '<div class="done"></div><div class="buf"></div>');

define('video-stage', `
  :host{display:block;height:100vh;padding:22px 24px 2px 20px;overflow:hidden}
  .frame{position:relative;display:flex;flex-direction:column;height:100%;overflow:hidden;background:#ebedeb}
  .frame > :not(main){flex:none}
  .shade{height:100%;box-shadow:0 0 20px rgba(0,0,0,.12)}
  main{display:flex;flex:1;min-height:0}
  .thumb{margin-right:10px}`,
  `<div class="shade"><div class="frame">
    <title-bar></title-bar><menu-bar></menu-bar><tool-header></tool-header><category-bar></category-bar><component-library></component-library>
    <main><mockup-list></mockup-list><design-canvas></design-canvas><property-panel></property-panel></main>
    <task-bar></task-bar><play-progress></play-progress>
    <bullet-comment style="left:264px;top:7px">画图大师</bullet-comment>
    <bullet-comment style="left:664px;top:7px">不存</bullet-comment>
    <bullet-comment style="left:1002px;top:7px">散兵</bullet-comment>
    <bullet-comment style="left:716px;top:74px"><svg class="thumb" width="48" height="50" viewBox="0 0 48 50"><path d="M1 20q0-3 3-3h8v30H4q-3 0-3-4zM13 46V20q7-6 8-13 0-6 5-6 7 1 7 14h10q5 1 4 8l-3 18q-1 6-7 6H17z" fill="#ffcb6b"/></svg>因为rdd不存数据，所以他只能</bullet-comment>
    <play-badge></play-badge>
  </div></div>`);
</script>
</body>
</html>
